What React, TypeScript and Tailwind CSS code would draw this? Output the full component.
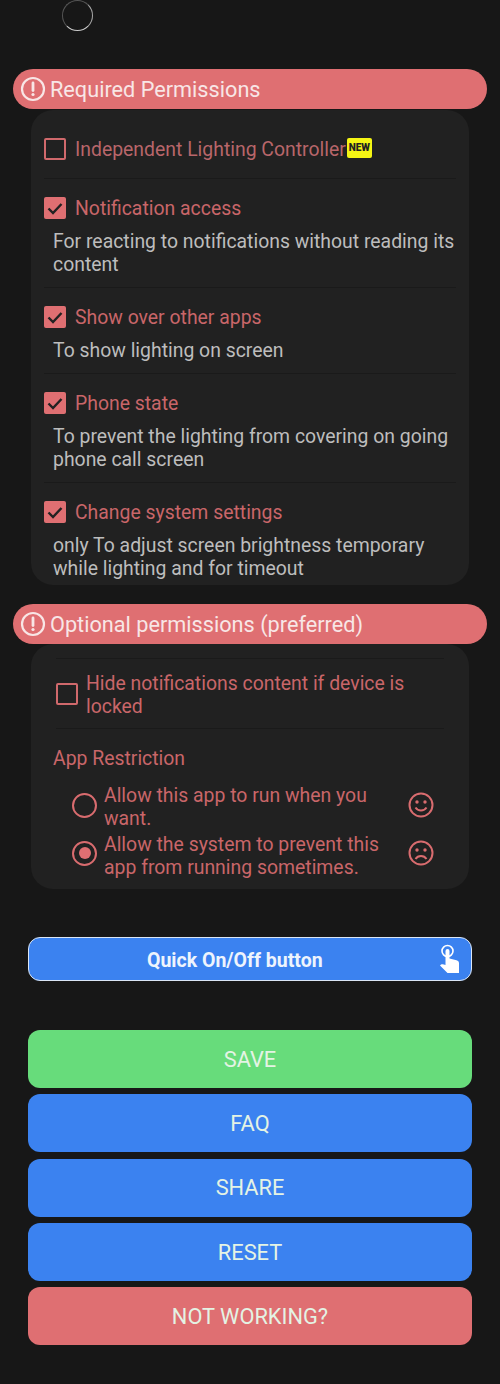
import React from 'react';

function Alert() {
  return (
    <svg viewBox="0 0 26 26" className="h-[26px] w-[26px] shrink-0" fill="none" stroke="#f8e6e6">
      <circle cx="13" cy="13" r="11" strokeWidth="2.2" />
      <path d="M13 7v7.5" strokeWidth="2.8" strokeLinecap="round" />
      <circle cx="13" cy="18.5" r="1.6" fill="#f8e6e6" stroke="none" />
    </svg>
  );
}

function Check({ on }: { on?: boolean }) {
  if (!on) {
    return <div className="h-[22px] w-[22px] shrink-0 rounded-[2px] border-[2.5px] border-[#d0696c]" />;
  }
  return (
    <div className="flex h-[22px] w-[22px] shrink-0 items-center justify-center rounded-[2px] bg-[#df6f72]">
      <svg viewBox="0 0 22 22" className="h-[22px] w-[22px]" fill="none" stroke="#222222" strokeWidth="2.4">
        <path d="M4.500 11.500l4.500 4.500 8.500-9" />
      </svg>
    </div>
  );
}

function Radio({ on }: { on?: boolean }) {
  return (
    <div className="flex h-[25px] w-[25px] shrink-0 items-center justify-center rounded-full border-[2.5px] border-[#d96c6f]">
      {on && <div className="h-[12px] w-[12px] rounded-full bg-[#df6f72]" />}
    </div>
  );
}

function Face({ happy }: { happy?: boolean }) {
  return (
    <svg viewBox="0 0 26 26" className="h-[26px] w-[26px] shrink-0" fill="none" stroke="#d96c6f" strokeWidth="2">
      <circle cx="13" cy="13" r="11.500" />
      <circle cx="9" cy="10" r="1.700" fill="#d96c6f" stroke="none" />
      <circle cx="17" cy="10" r="1.700" fill="#d96c6f" stroke="none" />
      {happy ? <path d="M7.500 15.500c2.500 4 8.500 4 11 0" /> : <path d="M7.500 19c2.500-4 8.500-4 11 0" />}
    </svg>
  );
}

function Hand() {
  return (
    <svg viewBox="0 0 22 30" className="h-[30px] w-[22px]" fill="none">
      <circle cx="8.500" cy="7" r="5.500" stroke="#ffffff" strokeWidth="1.600" />
      <path
        d="M6.500 7a2 2 0 0 1 4 0v7.500l7 1.800c1.600.4 2.500 1.500 2.500 3V29H8.500L1 21.500c1-1.600 3-1.800 5.500-.5z"
        fill="#ffffff"
      />
    </svg>
  );
}

function Header({ title }: { title: string }) {
  return (
    <div className="mx-[13px] flex h-10 items-center rounded-full bg-[#df6f72] pl-[7px] pr-3">
      <Alert />
      <span className="ml-[4px] translate-y-px text-[21.7px] text-[#f8e6e6]">{title}</span>
    </div>
  );
}

function Perm({ label, desc, on }: { label: string; desc?: string; on?: boolean }) {
  return (
    <div>
      <div className="flex h-[24px] items-center gap-[9px]">
        <Check on={on} />
        <span className="translate-y-px text-[19.4px] text-[#c96669]">{label}</span>
      </div>
      {desc && <p className="mt-[10px] pl-[9px] text-[19.4px] leading-[23px] text-[#bdbdbd]">{desc}</p>}
    </div>
  );
}

function Line() {
  return <div className="h-px bg-[#1a1a1a]" />;
}

function ActionButton({ label, color }: { label: string; color: string }) {
  return (
    <div className={`flex h-[58px] items-center justify-center rounded-xl text-[21.8px] text-[#e4f3e4] ${color}`}>
      <span className="translate-y-px">{label}</span>
    </div>
  );
}

export default function App() {
  return (
    <div className="h-[1384px] overflow-hidden bg-[#171717] font-['Roboto',sans-serif]">
      <div className="pl-[62px]">
        <div className="h-[31px] w-[31px] rounded-full border border-b-[#cccccc] border-l-[#555555] border-r-[#aaaaaa] border-t-[#555555]" />
      </div>

      <div className="mt-[38px]">
        <Header title="Required Permissions" />
        <div className="mx-[31px] mt-px h-[475px] overflow-hidden rounded-[22px] bg-[#212121] px-[13px] pt-[27px]">
          <div className="flex h-[24px] items-center gap-[9px]">
            <Check />
            <span className="translate-y-px text-[19.4px] text-[#b8666a]">Independent Lighting Controller</span>
            <span className="-ml-[8px] flex h-[20px] w-[25px] -translate-y-px items-center justify-center rounded-[2px] bg-[#f5f514] text-[10px] font-black leading-none text-[#222222]">
              NEW
            </span>
          </div>
          <div className="mb-[17px] mt-[17px]"><Line /></div>
          <Perm on label="Notification access" desc="For reacting to notifications without reading its content" />
          <div className="mb-[17px] mt-[11px]"><Line /></div>
          <Perm on label="Show over other apps" desc="To show lighting on screen" />
          <div className="mb-[17px] mt-[11px]"><Line /></div>
          <Perm on label="Phone state" desc="To prevent the lighting from covering on going phone call screen" />
          <div className="mb-[17px] mt-[11px]"><Line /></div>
          <Perm on label="Change system settings" desc="only To adjust screen brightness temporary while lighting and for timeout" />
        </div>
      </div>

      <div className="mt-[19px]">
        <Header title="Optional permissions (preferred)" />
        <div className="mx-[31px] h-[245px] rounded-[22px] bg-[#212121] px-[22px] pt-[14px]">
          <div className="mx-[3px]"><Line /></div>
          <div className="mt-[12px] flex items-center gap-[8px] pl-[3px]">
            <Check />
            <span className="translate-y-px text-[19.4px] leading-[23px] text-[#c96669]">Hide notifications content if device is locked</span>
          </div>
          <div className="mx-[3px] mt-[11px]"><Line /></div>
          <div className="mt-[18px] text-[19.4px] leading-[23px] text-[#c96669]">App Restriction</div>
          <div className="mt-[13px] flex flex-col gap-[3px] pl-[19px] pr-[13px]">
            <div className="flex items-center">
              <div className="-translate-y-px"><Radio /></div>
              <span className="ml-[7px] flex-1 translate-y-px text-[19.4px] leading-[23px] text-[#c96669]">Allow this app to run when you want.</span>
              <div className="-translate-y-px"><Face happy /></div>
            </div>
            <div className="flex items-center">
              <div className="-translate-y-[2px]"><Radio on /></div>
              <span className="ml-[7px] flex-1 translate-y-px text-[19.4px] leading-[23px] text-[#c96669]">Allow the system to prevent this app from running sometimes.</span>
              <div className="-translate-y-[2px]"><Face /></div>
            </div>
          </div>
        </div>
      </div>

      <div className="mx-[28px] mt-[48px] flex h-[44px] items-center rounded-xl border border-[#dbe6f5] bg-[#3b82f0] pl-[118px] pr-[10px]">
        <span className="flex-1 translate-y-[2px] text-[19.5px] font-bold text-[#eef4fd]">Quick On/Off button</span>
        <Hand />
      </div>

      <div className="mx-[28px] mt-[49px] flex flex-col gap-[6.3px]">
        <ActionButton label="SAVE" color="bg-[#67dc7b]" />
        <ActionButton label="FAQ" color="bg-[#3b82f0]" />
        <ActionButton label="SHARE" color="bg-[#3b82f0]" />
        <ActionButton label="RESET" color="bg-[#3b82f0]" />
        <ActionButton label="NOT WORKING?" color="bg-[#df6f72]" />
      </div>
    </div>
  );
}
